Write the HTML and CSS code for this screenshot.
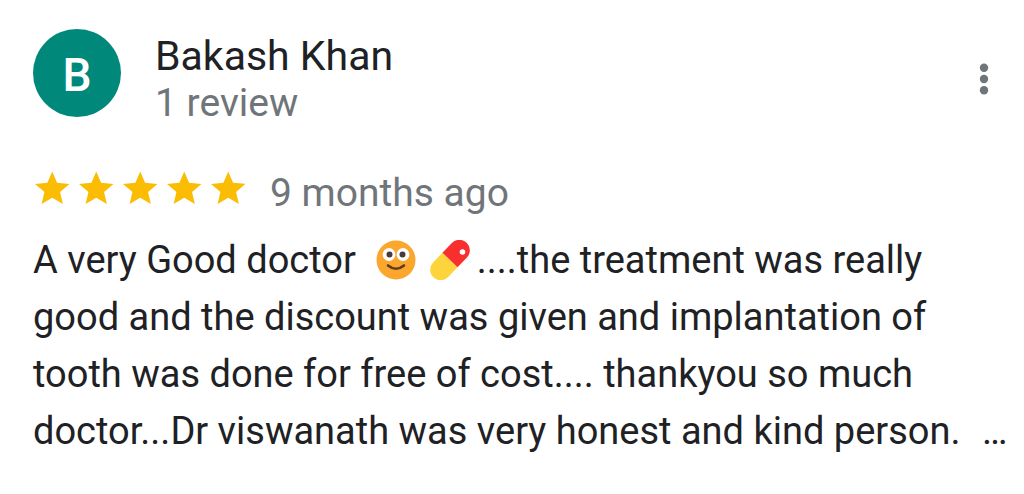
FILE: index.html
```html
<!DOCTYPE html>
<html lang="en">
<head>
<meta charset="utf-8">
<title>Review by Bakash Khan</title>
<link rel="stylesheet" href="styles.css">
</head>
<body>
<article class="review">
  <header class="reviewer">
    <div class="avatar" aria-hidden="true">B</div>
    <div class="identity">
      <a class="name" href="#">Bakash Khan</a>
      <div class="count">1 review</div>
    </div>
    <button class="menu" type="button" aria-label="More options">
      <svg viewBox="0 0 12 32" width="12" height="32"><circle cx="6" cy="4.7" r="4.2"/><circle cx="6" cy="16" r="4.2"/><circle cx="6" cy="27.3" r="4.2"/></svg>
    </button>
  </header>
  <div class="rating">
    <svg class="stars" viewBox="0 0 212 34" width="212" height="34" role="img" aria-label="5 out of 5 stars">
      <defs><path id="star" transform="translate(-1.4 -3) scale(1.72)" d="M12 17.27L18.18 21l-1.64-7.03L22 9.24l-7.19-.61L12 2 9.19 8.63 2 9.24l5.46 4.73L5.82 21z"/></defs>
      <use href="#star"/><use href="#star" x="44"/><use href="#star" x="88"/><use href="#star" x="132"/><use href="#star" x="176"/>
    </svg>
    <span class="age">9 months ago</span>
  </div>
  <p class="text">A very Good doctor
    <svg class="emoji face" viewBox="0 0 40 40" width="40" height="40" role="img" aria-label="Smiling face"><circle cx="20" cy="20" r="19.5" fill="#fba62d"/><circle cx="13" cy="14.5" r="6.4" fill="#fff"/><circle cx="27" cy="14.5" r="6.4" fill="#fff"/><circle cx="13.5" cy="14.5" r="3" fill="#4a3840"/><circle cx="26.5" cy="14.5" r="3" fill="#4a3840"/><path d="M12 25.5Q20 32 28 25.5" fill="none" stroke="#5f3d20" stroke-width="2.6" stroke-linecap="round"/></svg>
    <svg class="emoji pill" viewBox="0 0 40 40" width="40" height="40" role="img" aria-label="Pill"><g transform="rotate(-46 20 20)"><path d="M20 9.5H6.5a10.5 10.5 0 0 0 0 21H20z" fill="#fdd43c"/><path d="M20 9.5h13.5a10.5 10.5 0 0 1 0 21H20z" fill="#f92f2f"/></g><circle cx="32.5" cy="12" r="2.8" fill="#fff"/></svg>....the treatment was really good and the discount was given and implantation of tooth was done for free of cost.... thankyou so much doctor...Dr viswanath was very honest and kind person. <span class="more">…</span></p>
</article>
</body>
</html>
```
FILE: styles.css
```css
body {
  margin: 0;
  background: #fff;
  color: #202124;
  font-family: Roboto, Arial, sans-serif;
}
.review { padding: 29px 12px 24px 33px; }
.reviewer { display: flex; align-items: flex-start; gap: 34px; }
.avatar {
  flex: none;
  display: grid;
  place-items: center;
  box-sizing: border-box;
  width: 88px;
  height: 88px;
  padding-top: 4px;
  border-radius: 50%;
  background: #00897b;
  color: #fff;
  font-size: 46px;
  font-weight: 500;
}
.identity { flex: 1; padding-top: 4px; line-height: 47px; }
.name { display: block; color: inherit; font-size: 41px; text-decoration: none; }
.count { color: #70757a; font-size: 39px; }
.menu { margin: 34px 22px 0 0; padding: 0; border: 0; background: none; }
.menu svg { display: block; fill: #70757a; }
.rating { display: flex; align-items: flex-start; gap: 25px; margin-top: 38px; }
.stars { margin-top: 6px; fill: #fbbc04; }
.age { color: #70757a; font-size: 39px; line-height: 57px; }
.text { margin: 10px 0 0; font-size: 38px; line-height: 57px; }
.emoji { vertical-align: -7px; }
.face { margin-left: 11px; }
.pill { margin: 0 7px 0 4px; }
.more { margin-left: 12px; }
```
